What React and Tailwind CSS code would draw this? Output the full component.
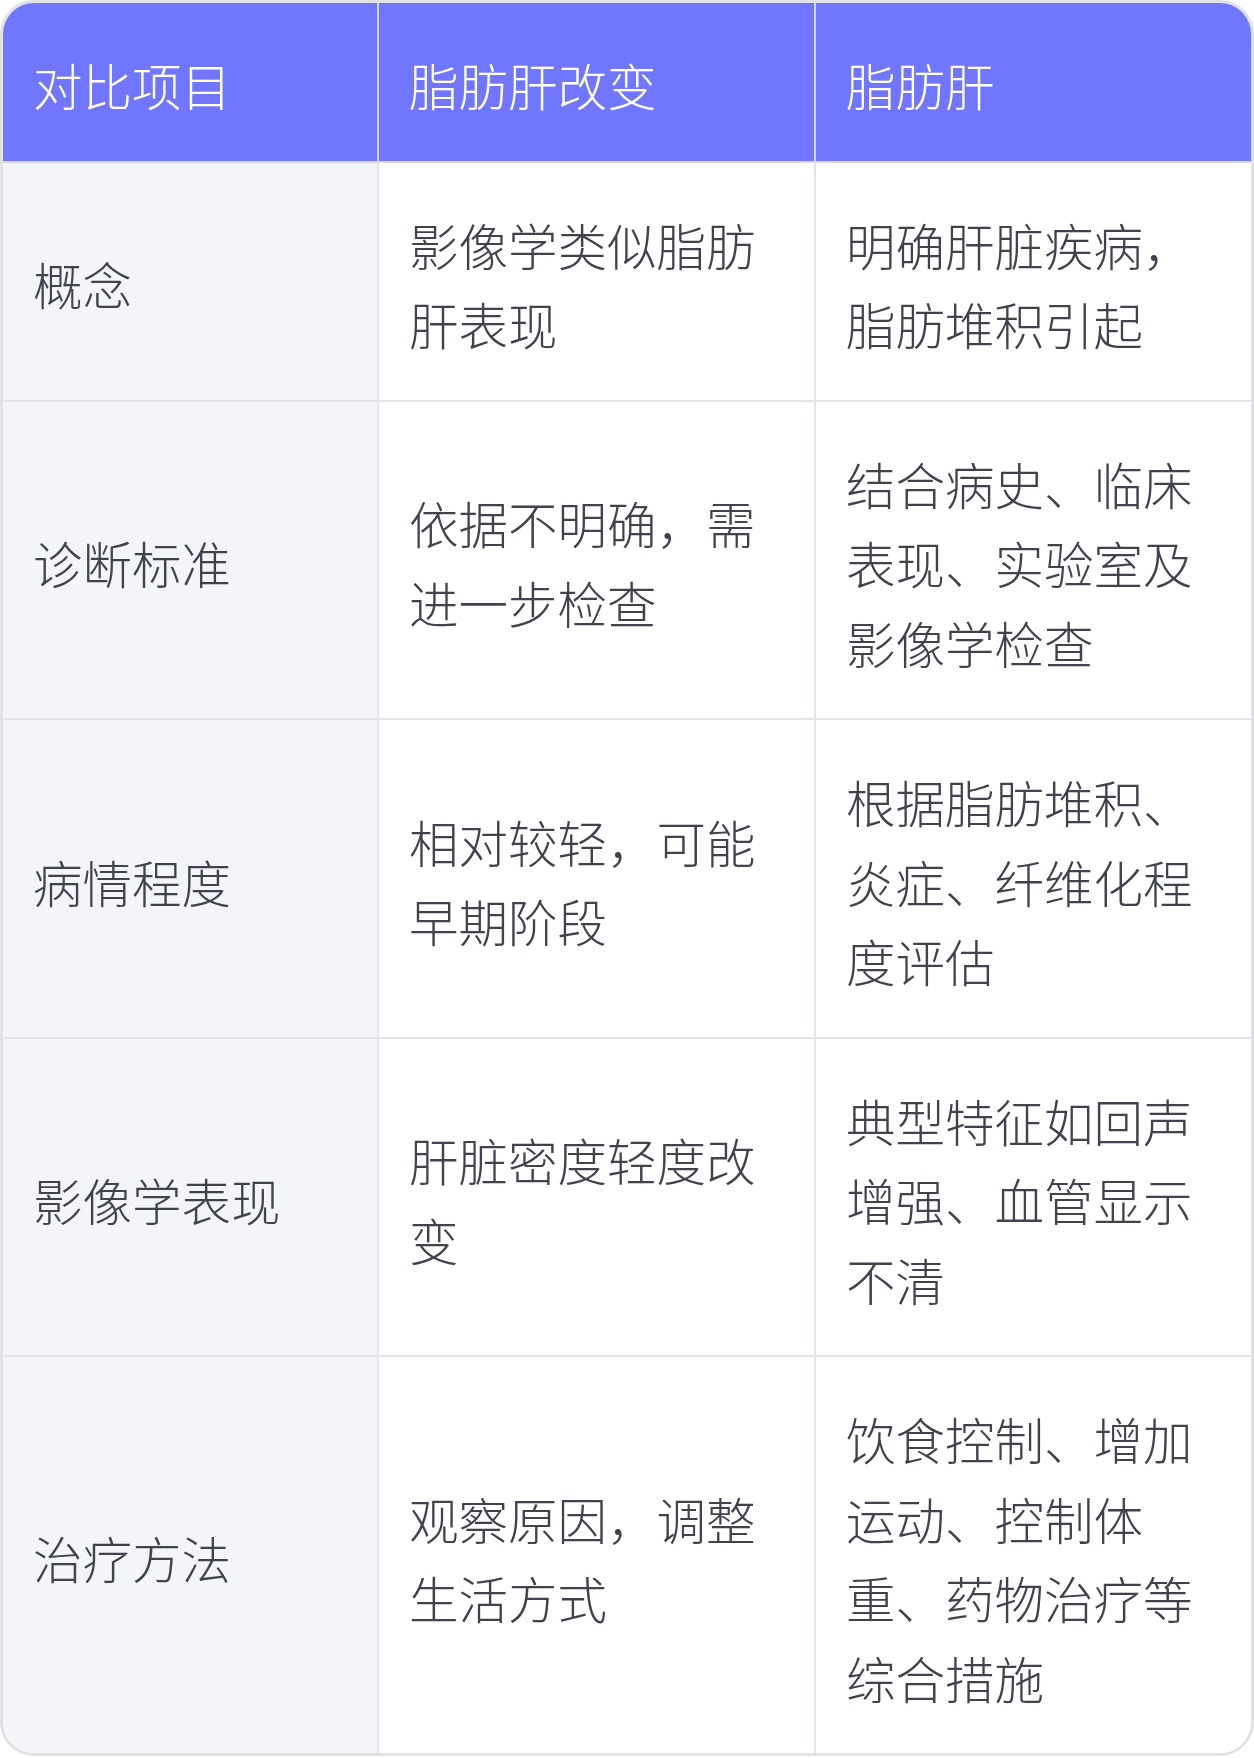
import React from 'react';

const rows = [
  { item: '概念', a: '影像学类似脂肪肝表现', b: '明确肝脏疾病，脂肪堆积引起' },
  { item: '诊断标准', a: '依据不明确，需进一步检查', b: '结合病史、临床表现、实验室及影像学检查' },
  { item: '病情程度', a: '相对较轻，可能早期阶段', b: '根据脂肪堆积、炎症、纤维化程度评估' },
  { item: '影像学表现', a: '肝脏密度轻度改变', b: '典型特征如回声增强、血管显示不清' },
  { item: '治疗方法', a: '观察原因，调整生活方式', b: '饮食控制、增加运动、控制体重、药物治疗等综合措施' },
];

export default function App() {
  return (
    <div
      className="w-[1254px] bg-white text-[49.5px] leading-[79.5px]"
      style={{ fontFamily: '"Noto Sans CJK SC", "Noto Sans", sans-serif' }}
    >
      <div className="border-[3px] border-[#e1e2e6] rounded-[34px] overflow-hidden">
        <div className="grid grid-cols-[376px_437px_1fr]">
          {/* header */}
          <div className="bg-[#7076ff] text-white font-light px-[30px] pt-[42px] pb-[36px] border-r-2 border-b-2 border-[#d6d8f2]">对比项目</div>
          <div className="bg-[#7076ff] text-white font-light px-[30px] pt-[42px] pb-[36px] border-r-2 border-b-2 border-[#d6d8f2]">脂肪肝改变</div>
          <div className="bg-[#7076ff] text-white font-light px-[30px] pt-[42px] pb-[36px] border-b-2 border-[#d6d8f2]">脂肪肝</div>

          {rows.map((r, i) => {
            const last = i === rows.length - 1;
            return (
              <React.Fragment key={i}>
                <div className={`flex items-center bg-[#f4f5f9] text-[#40434e] font-light px-[30px] pt-[42px] pb-[36px] border-r-2 border-[#e3e4e8] ${last ? '' : 'border-b-2'}`}>
                  {r.item}
                </div>
                <div className={`flex items-center bg-white text-[#40434e] font-light px-[30px] pt-[42px] pb-[36px] border-r-2 border-[#e3e4e8] ${last ? '' : 'border-b-2'}`}>
                  {r.a}
                </div>
                <div className={`flex items-center bg-white text-[#40434e] font-light px-[30px] pt-[42px] pb-[36px] border-[#e3e4e8] ${last ? '' : 'border-b-2'}`}>
                  {r.b}
                </div>
              </React.Fragment>
            );
          })}
        </div>
      </div>
    </div>
  );
}
